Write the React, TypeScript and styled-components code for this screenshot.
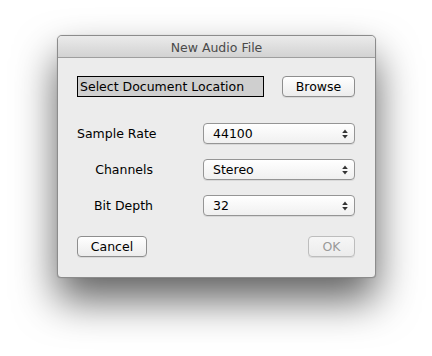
import { Fragment } from 'react';
import styled, { createGlobalStyle } from 'styled-components';

const GlobalStyle = createGlobalStyle`
  html, body {
    margin: 0;
    padding: 0;
    background: #ffffff;
  }
  body {
    font-family: "DejaVu Sans", "Liberation Sans", sans-serif;
    font-size: 12px;
    color: #000;
  }
`;

const Stage = styled.div`
  width: 432px;
  height: 356px;
  padding: 35px 0 0 57px;
  box-sizing: border-box;
`;

const Window = styled.div`
  width: 319px;
  height: 243px;
  box-sizing: border-box;
  border: 1px solid #8c8c8c;
  border-radius: 5px 5px 4px 4px;
  background: #ececec;
  box-shadow: 0 22px 42px rgba(0, 0, 0, 0.62), 0 0 1px rgba(0, 0, 0, 0.3);
  display: flex;
  flex-direction: column;
  overflow: hidden;
`;

const TitleBar = styled.div`
  height: 22px;
  flex: 0 0 22px;
  border-bottom: 1px solid #9e9e9e;
  background: linear-gradient(#ebebeb, #d2d2d2);
  display: flex;
  align-items: center;
  justify-content: center;
  font-size: 12.5px;
  color: #4a4a4a;
  padding-top: 1px;
  box-sizing: border-box;
`;

const Body = styled.div`
  flex: 1;
  padding: 18px 20px 0 19px;
  display: flex;
  flex-direction: column;
`;

const TopRow = styled.div`
  display: flex;
  justify-content: space-between;
  align-items: flex-start;
  width: 278px;
`;

const LocationField = styled.div`
  width: 187px;
  height: 21px;
  box-sizing: border-box;
  border: 1px solid #000;
  background: #cfcfcf;
  display: flex;
  align-items: center;
  padding-left: 2px;
  font-size: 12.5px;
`;

const PushButton = styled.button<{ $width: number; $disabled?: boolean }>`
  width: ${(p) => p.$width}px;
  height: 21px;
  box-sizing: border-box;
  border: 1px solid ${(p) => (p.$disabled ? '#bdbdbd' : '#8e8e8e')};
  border-radius: 4px;
  background: ${(p) =>
    p.$disabled ? 'linear-gradient(#f6f6f6, #ececec)' : 'linear-gradient(#ffffff, #ececec)'};
  box-shadow: 0 1px 0 rgba(0, 0, 0, 0.08);
  font-family: inherit;
  font-size: 12.5px;
  color: ${(p) => (p.$disabled ? '#9a9a9a' : '#000')};
  padding: 0;
  display: flex;
  align-items: center;
  justify-content: center;
`;

const Form = styled.div`
  display: grid;
  grid-template-columns: 126px 152px;
  row-gap: 15px;
  margin-top: 26px;
  align-items: center;
`;

const Label = styled.div`
  text-align: right;
  white-space: nowrap;
  font-size: 12.5px;
  padding-right: 50px;
`;

const Popup = styled.div`
  height: 21px;
  box-sizing: border-box;
  border: 1px solid #959595;
  border-radius: 4px;
  background: linear-gradient(#ffffff, #f0f0f0);
  box-shadow: 0 1px 0 rgba(0, 0, 0, 0.08);
  display: flex;
  align-items: center;
  justify-content: space-between;
  padding: 0 6px 0 9px;
  font-size: 12.5px;
`;

const Footer = styled.div`
  display: flex;
  justify-content: space-between;
  width: 278px;
  margin-top: 20px;
`;

function Arrows() {
  return (
    <svg width="6" height="10" viewBox="0 0 6 10">
      <path d="M3 0.5 L5.8 4 L0.2 4 Z" fill="#333" />
      <path d="M3 9.5 L5.8 6 L0.2 6 Z" fill="#333" />
    </svg>
  );
}

const rows = [
  { label: 'Sample Rate', value: '44100' },
  { label: 'Channels', value: 'Stereo' },
  { label: 'Bit Depth', value: '32' },
];

export default function App() {
  return (
    <Stage>
      <GlobalStyle />
      <Window>
        <TitleBar>New Audio File</TitleBar>
        <Body>
          <TopRow>
            <LocationField>Select Document Location</LocationField>
            <PushButton $width={73}>Browse</PushButton>
          </TopRow>
          <Form>
            {rows.map((r) => (
              <Fragment key={r.label}>
                <Label>{r.label}</Label>
                <Popup>
                  {r.value}
                  <Arrows />
                </Popup>
              </Fragment>
            ))}
          </Form>
          <Footer>
            <PushButton $width={70}>Cancel</PushButton>
            <PushButton $width={47} $disabled>
              OK
            </PushButton>
          </Footer>
        </Body>
      </Window>
    </Stage>
  );
}
